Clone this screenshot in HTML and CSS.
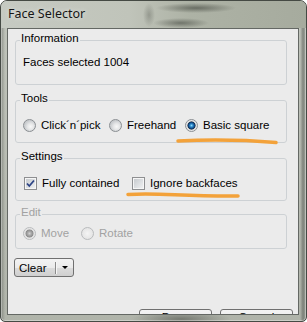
FILE: index.html
```html
<!DOCTYPE html>
<html lang="en">
<head>
    <meta charset="UTF-8">
    <meta name="viewport" content="width=device-width, initial-scale=1.0">
    <title>Face Selector</title>
    <link rel="stylesheet" href="styles.css">
</head>
<body>
    <div class="window">
        <div class="titlebar">Face Selector</div>
        <div class="client">
            <fieldset class="group group-info">
                <legend>Information</legend>
                <div class="info-text">Faces selected 1004</div>
            </fieldset>

            <fieldset class="group">
                <legend>Tools</legend>
                <div class="row row-tools">
                    <label class="option"><input type="radio" name="tool" class="radio"><span>Click´n´pick</span></label>
                    <label class="option"><input type="radio" name="tool" class="radio"><span>Freehand</span></label>
                    <label class="option"><input type="radio" name="tool" class="radio" checked><span>Basic square</span></label>
                </div>
            </fieldset>

            <fieldset class="group">
                <legend>Settings</legend>
                <div class="row row-settings">
                    <label class="option">
                        <span class="checkbox">
                            <svg width="11" height="11" viewBox="0 0 11 11"><path d="M2 5.5 L4.3 8 L9 2.5" fill="none" stroke="#2d4486" stroke-width="1.8"/></svg>
                        </span>
                        <span>Fully contained</span>
                    </label>
                    <label class="option">
                        <span class="checkbox"></span>
                        <span>Ignore backfaces</span>
                    </label>
                </div>
            </fieldset>

            <fieldset class="group group-edit" disabled>
                <legend>Edit</legend>
                <div class="row row-edit">
                    <label class="option"><input type="radio" name="edit" class="radio" checked><span>Move</span></label>
                    <label class="option"><input type="radio" name="edit" class="radio"><span>Rotate</span></label>
                </div>
            </fieldset>

            <div class="split-button">
                <span class="split-label">Clear</span>
                <span class="split-sep"></span>
                <span class="split-arrow"></span>
            </div>

            <div class="footer">
                <button class="btn">Done</button>
                <button class="btn">Cancel</button>
            </div>
        </div>

        <svg class="marks" width="307" height="322" viewBox="0 0 307 322">
            <path d="M178 141 C 210 139.5, 245 140, 276 142.5" />
            <path d="M128 194.5 C 160 192.5, 180 196.5, 238 196" />
        </svg>
    </div>
</body>
</html>
```

FILE: styles.css
```css
body {
    margin: 0;
    font-family: "Liberation Sans", Arial, sans-serif;
    font-size: 11.5px;
    color: #000;
    background: #fff;
}
.window {
    position: relative;
    box-sizing: border-box;
    width: 307px;
    height: 322px;
    border: 1px solid #454a44;
    border-radius: 7px 7px 5px 5px;
    display: flex;
    flex-direction: column;
    overflow: hidden;
    background:
        radial-gradient(ellipse 50px 8px at 180px 318px, rgba(70, 74, 66, 0.55), transparent),
        linear-gradient(to right, rgba(90, 94, 88, 0.5) 0, rgba(90, 94, 88, 0) 4px, rgba(0, 0, 0, 0) 299px, rgba(80, 84, 78, 0.55) 302px, rgba(80, 84, 78, 0.2) 305px),
        linear-gradient(#c0c4bb, #b0b4aa);
    box-shadow: inset 0 0 0 1px rgba(255, 255, 255, 0.35);
}
.titlebar {
    height: 27px;
    line-height: 25px;
    padding-left: 7px;
    font-family: "Noto Sans", "Open Sans", sans-serif;
    font-size: 12.5px;
    color: #161616;
    text-shadow: 0 0 5px rgba(255, 255, 255, 0.7);
    background:
        radial-gradient(ellipse 40px 5px at 195px 7px, rgba(60, 64, 56, 0.6), transparent),
        radial-gradient(ellipse 28px 5px at 180px 22px, rgba(60, 64, 56, 0.55), transparent),
        radial-gradient(ellipse 6px 12px at 148px 14px, rgba(80, 84, 76, 0.35), transparent),
        linear-gradient(90deg, #c6cac2 0%, #c0c4ba 42%, #adb2a5 62%, #a6ab9e 100%);
}
.client {
    box-sizing: border-box;
    height: 287px;
    margin: 0 7px 6px 6px;
    padding: 0 11px 0 7px;
    border: 1px solid #646864;
    background: #ebebeb;
    overflow: hidden;
}
.group {
    margin: 6px 0 0;
    padding: 8px 7px 9px;
    border: 1px solid #cdd1d4;
    border-radius: 3px;
}
.group legend {
    margin-left: -3px;
    padding: 0 1px 4px;
    line-height: 14px;
}
.group-info {
    margin-top: 2px;
    padding: 6px 7px 15px;
}
.info-text {
    line-height: 14px;
}
.group-edit {
    margin-top: 4px;
    padding: 2px 7px 7px;
    color: #a2a2a2;
}
.row {
    display: grid;
    height: 16px;
    align-items: center;
}
.row-tools {
    grid-template-columns: 86px 76px 1fr;
}
.row-settings {
    grid-template-columns: 108px 1fr;
}
.row-edit {
    grid-template-columns: 58px 1fr;
}
.option {
    display: flex;
    align-items: center;
    gap: 5px;
    white-space: nowrap;
}
.radio {
    appearance: none;
    -webkit-appearance: none;
    box-sizing: border-box;
    width: 13px;
    height: 13px;
    margin: 0;
    border: 1px solid #8a8e92;
    border-radius: 50%;
    background: radial-gradient(circle at 60% 60%, #f8f8f8 0, #e6e7e8 3px, #c9cccf 6px);
}
.radio:checked {
    background: radial-gradient(circle at 50% 50%, #8fdcff 0, #2a86c8 1.6px, #0d3f78 3.2px, #243346 3.8px, #d7d9db 4.3px, #f4f4f4 6px);
}
.group-edit .radio {
    border-color: #b9bbbd;
    background: radial-gradient(circle at 50% 50%, #f4f4f4 0, #e4e4e4 6px);
}
.group-edit .radio:checked {
    background: radial-gradient(circle at 50% 50%, #d2d2d2 0, #a7a7a7 2px, #8d8d8d 3.6px, #dcdcdc 4.3px, #f2f2f2 6px);
}
.checkbox {
    box-sizing: border-box;
    width: 13px;
    height: 13px;
    margin-left: 1px;
    border: 1px solid #8e8f91;
    background: linear-gradient(135deg, #c3c7cb, #f3f4f5);
    box-shadow: inset 0 0 0 1px #f6f6f6;
    display: flex;
    align-items: center;
    justify-content: center;
}
.checkbox svg {
    display: block;
}
.split-button {
    box-sizing: border-box;
    margin: 9px 0 0 -1px;
    width: 60px;
    height: 19px;
    border: 1px solid #707070;
    border-radius: 3px;
    background: linear-gradient(#f3f3f3 0, #ebebeb 50%, #dcdcdc 50%, #cfcfcf 100%);
    display: flex;
    align-items: center;
}
.split-label {
    box-sizing: border-box;
    width: 40px;
    padding-left: 4px;
}
.split-sep {
    width: 1px;
    height: 12px;
    background: #8a8a8a;
    box-shadow: 1px 0 0 #f6f6f6;
}
.split-arrow {
    margin-left: 6px;
    width: 0;
    height: 0;
    border-left: 3px solid transparent;
    border-right: 3px solid transparent;
    border-top: 3px solid #000;
}
.footer {
    margin: 32px -6px 0 0;
    display: flex;
    justify-content: flex-end;
    gap: 8px;
}
.btn {
    width: 73px;
    padding: 0 0 8px;
    font: inherit;
    line-height: 14px;
    color: #000;
    border: 1px solid #707070;
    border-radius: 3px;
    background: linear-gradient(#f3f3f3 0, #ebebeb 50%, #dcdcdc 50%, #cfcfcf 100%);
}
.marks {
    position: absolute;
    left: -1px;
    top: -1px;
    pointer-events: none;
}
.marks path {
    fill: none;
    stroke: #f3a23a;
    stroke-width: 3.5;
    stroke-linecap: round;
}
```
